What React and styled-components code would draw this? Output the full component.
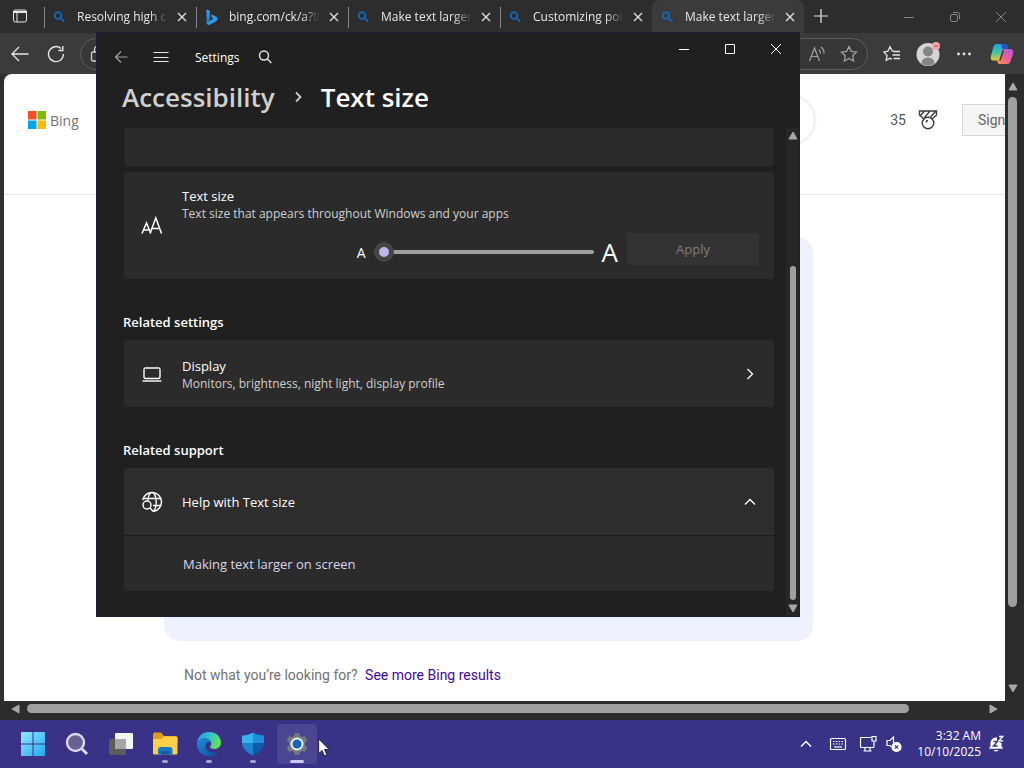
import { useState } from 'react';
import styled, { createGlobalStyle } from "styled-components"

const tabs = [
    { id: 1, title: "Resolving high contrast", icon: "search" },
    { id: 2, title: "bing.com/ck/a?!&&p=", icon: "bing" },
    { id: 3, title: "Make text larger on", icon: "search" },
    { id: 4, title: "Customizing pointer", icon: "search" },
    { id: 5, title: "Make text larger on", icon: "search" },
]

function TabIcon({ icon }) {
    if (icon === "bing") {
        return (
            <Glyph $size={16} viewBox="0 0 16 16" stroke="none">
                <defs>
                    <linearGradient id="bingA" x1="0" y1="0" x2="0" y2="1">
                        <stop offset="0" stopColor="#37a5f5" />
                        <stop offset="1" stopColor="#1570d8" />
                    </linearGradient>
                </defs>
                <path d="M2.500.6 5.800 1.800v9.400L2.500 13.400z" fill="url(#bingA)" />
                <path d="M7 5.200 12 7.400c1.800 1 2 3.300.6 4.600L6.200 15.600c-1.800.9-3.700-.2-3.700-2.200l7-3.600-1.600-.9z" fill="#2c9be6" />
            </Glyph>
        )
    }
    return (
        <Glyph $size={14} viewBox="0 0 14 14" stroke="#1a62ae" strokeWidth="2">
            <circle cx="6" cy="5.500" r="3.300" />
            <path d="M8.500 8 12 11.500" />
        </Glyph>
    )
}

function BrowserTabs() {
    const [active, setActive] = useState(5)
    return (
        <TabStrip>
            <TabActions $w={40} $h={32} aria-label="Tab actions">
                <Glyph $size={16} viewBox="0 0 16 16">
                    <rect x="1.500" y="2" width="13" height="12" rx="2" />
                    <path d="M1.500 4.500h13M1.500 3.500h13M5 5v9" />
                </Glyph>
            </TabActions>
            {tabs.map((tab) => (
                <Tab key={tab.id} $active={tab.id === active}>
                    <TabIcon icon={tab.icon} />
                    <TabTitle onClick={() => setActive(tab.id)}>{tab.title}</TabTitle>
                    <PlainButton $w={20} $h={20} aria-label="Close tab">
                        <Glyph $size={10} viewBox="0 0 10 10" strokeWidth="1.200"><path d="m1 1 8 8M9 1 1 9" /></Glyph>
                    </PlainButton>
                </Tab>
            ))}
            <PlainButton $w={34} $h={32} aria-label="New tab">
                <Glyph $size={14} viewBox="0 0 14 14" strokeWidth="1.200"><path d="M7 0v14M0 7h14" /></Glyph>
            </PlainButton>
            <CaptionButtons>
                <PlainButton $w={46} $h={34} aria-label="Minimize browser">
                    <Glyph $size={12} viewBox="0 0 12 12"><path d="M1 6.500h10" /></Glyph>
                </PlainButton>
                <PlainButton $w={46} $h={34} aria-label="Restore browser">
                    <Glyph $size={12} viewBox="0 0 12 12">
                        <rect x="1.500" y="3.500" width="7" height="7" rx="1.500" />
                        <path d="M4 1.500h4.500a2 2 0 0 1 2 2V8" />
                    </Glyph>
                </PlainButton>
                <PlainButton $w={46} $h={34} aria-label="Close browser">
                    <Glyph $size={12} viewBox="0 0 12 12"><path d="m1 1 10 10M11 1 1 11" /></Glyph>
                </PlainButton>
            </CaptionButtons>
        </TabStrip>
    )
}

function BrowserToolbar() {
    return (
        <Toolbar>
            <PlainButton $w={36} $h={32} aria-label="Back">
                <Glyph $size={18} viewBox="0 0 18 18" strokeWidth="1.300"><path d="M17.500 9H1.500M8 2 1 9l7 7" /></Glyph>
            </PlainButton>
            <PlainButton $w={36} $h={32} aria-label="Refresh">
                <Glyph $size={18} viewBox="0 0 18 18" strokeWidth="1.400"><path d="M16.500 9A7.500 7.500 0 1 1 14 3.500M15.800 1v4.500h-4.500" /></Glyph>
            </PlainButton>
            <AddressBar>
                <Glyph $size={18} viewBox="0 0 18 18" strokeWidth="1.300">
                    <rect x="2.500" y="7" width="13" height="9" rx="1.500" />
                    <path d="M5.500 7V4.500a3.500 3.500 0 0 1 7 0V7" />
                </Glyph>
                <AddressInput aria-label="Address" />
                <PlainButton $w={32} $h={28} $dim aria-label="Read aloud">
                    <Glyph $size={18} viewBox="0 0 18 18" strokeWidth="1.200">
                        <path d="M1.500 16 6.500 3l5 13M3.200 11.500h6.600M11 4.500q1.800 1.500 1.500 4M13 2q3.300 2.500 3 6.500" />
                    </Glyph>
                </PlainButton>
                <PlainButton $w={32} $h={28} $dim aria-label="Add to favorites">
                    <Glyph $size={18} viewBox="0 0 18 18" strokeWidth="1.300">
                        <path d="m9 1.500 2.300 4.900 5.200.7-3.800 3.700.9 5.300L9 13.500l-4.600 2.600.9-5.300L1.500 7.100l5.200-.7z" />
                    </Glyph>
                </PlainButton>
            </AddressBar>
            <ToolbarActions>
                <PlainButton $w={36} $h={32} aria-label="Favorites">
                    <Glyph $size={18} viewBox="0 0 18 18" strokeWidth="1.300">
                        <path d="M11 6.300 9.300 6 7 1.800 4.900 6.200.8 7l3.200 3.400-.8 5L7 13.300l1.800.9M10.500 6.500H17M9.500 10H17M10.500 13.500H17" />
                    </Glyph>
                </PlainButton>
                <PlainButton $w={36} $h={32} aria-label="Profile">
                    <Glyph $size={26} viewBox="0 0 26 26" stroke="none">
                        <circle cx="13" cy="13.500" r="11.500" fill="#d5d5d5" />
                        <circle cx="13" cy="10.500" r="5" fill="#858585" />
                        <path d="M6.500 22.500c0-3 2-6 6.500-6s6.500 3 6.500 6q-6.500 4.500-13 0z" fill="#858585" />
                        <circle cx="21" cy="5" r="4" fill="#f3a6ac" />
                        <path d="M19 5h4" stroke="#b8434e" />
                    </Glyph>
                </PlainButton>
                <PlainButton $w={36} $h={32} aria-label="Settings and more">
                    <Glyph $size={16} viewBox="0 0 16 16" fill="#e6e6e6" stroke="none">
                        <circle cx="2.500" cy="8" r="1.400" /><circle cx="8" cy="8" r="1.400" /><circle cx="13.500" cy="8" r="1.400" />
                    </Glyph>
                </PlainButton>
                <PlainButton $w={40} $h={32} aria-label="Copilot">
                    <Glyph $size={24} viewBox="0 0 24 24" stroke="none">
                        <defs>
                            <linearGradient id="copA" x1="0" y1="0" x2="0" y2="1">
                                <stop offset="0" stopColor="#1f9ee8" /><stop offset=".5" stopColor="#3cc5a0" /><stop offset="1" stopColor="#f0c930" />
                            </linearGradient>
                            <linearGradient id="copB" x1="1" y1="0" x2="0" y2="1">
                                <stop offset="0" stopColor="#a35be8" /><stop offset=".5" stopColor="#ee5b9c" /><stop offset="1" stopColor="#f79a45" />
                            </linearGradient>
                        </defs>
                        <path d="M6.500 2h8.200c1.600 0 2.300 1 2.800 2.600l.7 2.300h-2.900c-1.800 0-2.400.8-2.900 2.500l-2 6.800c-.5 1.700-1.200 2.400-2.800 2.400H3.500c-2.800 0-3.200-2.500-2.500-5L3.300 5.200C3.900 3.100 4.800 2 6.500 2z" fill="url(#copA)" />
                        <path d="M11.500 2h3.200c1.600 0 2.300 1 2.800 2.600l.7 2.300h-2.900c-1.500 0-2.200.6-2.700 1.800z" fill="#2454c9" />
                        <path d="M17.500 22H10c-1.600 0-2.300-1-2.800-2.600l-.3-.8c1.600 0 2.300-.7 2.800-2.400l2-6.800c.5-1.700 1.100-2.500 2.900-2.500h5.900c2.800 0 3.200 2.500 2.500 5l-2.300 6.900c-.6 2.100-1.500 3.200-3.200 3.200z" fill="url(#copB)" />
                        <path d="M13.300 8.500 10 18.500" stroke="#3b3b3b" strokeWidth="1.500" />
                    </Glyph>
                </PlainButton>
            </ToolbarActions>
        </Toolbar>
    )
}

function BingPage() {
    return (
        <Page>
            <PageHeader>
                <MsLogo viewBox="0 0 18 18">
                    <path d="M0 0h8.500v8.500H0z" fill="#f25022" />
                    <path d="M9.500 0H18v8.500H9.500z" fill="#7fba00" />
                    <path d="M0 9.500h8.500V18H0z" fill="#00a4ef" />
                    <path d="M9.500 9.500H18V18H9.500z" fill="#ffb900" />
                </MsLogo>
                <Brand>Bing</Brand>
                <SearchBox aria-label="Search" />
                <Points>35</Points>
                <Glyph $size={20} viewBox="0 0 20 20" stroke="#3c3c3c" strokeWidth="1.400">
                    <path d="M1.500 1h17v4l-4 3.500h-9l-4-3.500zM6.500 1 2.500 5.500M12 1 6.500 7.500M17.500 1.500 12.500 7" />
                    <circle cx="10" cy="13" r="5.800" fill="#fff" />
                    <path d="M8 12.500a2.200 2.200 0 0 1 2-2" />
                </Glyph>
                <SignIn>Sign in</SignIn>
            </PageHeader>
            <AnswerCard />
            <PageFooter>
                Not what you’re looking for? <a href="#results">See more Bing results</a>
            </PageFooter>
        </Page>
    )
}

function Arrow({ dir }) {
    const paths = {
        up: "M5 1 9 8H1z",
        down: "M5 9 1 2h8z",
        left: "M1 5l7-4v8z",
        right: "M9 5 2 9V1z",
    }
    return (
        <Glyph $size={10} viewBox="0 0 10 10" fill="#a8a8a8" stroke="#a8a8a8"><path d={paths[dir]} strokeLinejoin="round" /></Glyph>
    )
}

function SettingsApp() {
    const [size, setSize] = useState(0)
    const [open, setOpen] = useState(true)
    return (
        <SettingsWindow>
            <TitleBar>
                <PlainButton $w={40} $h={32} $dim aria-label="Go back">
                    <Glyph $size={14} viewBox="0 0 14 14" strokeWidth="1.200"><path d="M13.500 7H1.500M7 1.500 1.500 7 7 12.500" /></Glyph>
                </PlainButton>
                <PlainButton $w={40} $h={32} aria-label="Open navigation">
                    <Glyph $size={16} viewBox="0 0 16 16"><path d="M.5 3.500h15M.5 8.500h15M.5 12.500h15" /></Glyph>
                </PlainButton>
                <AppName>Settings</AppName>
                <PlainButton $w={32} $h={32} aria-label="Find a setting">
                    <Glyph $size={14} viewBox="0 0 14 14" strokeWidth="1.400"><circle cx="6" cy="5.500" r="4.500" /><path d="m9.300 8.800 4 4.200" /></Glyph>
                </PlainButton>
                <WindowButtons>
                    <PlainButton $w={46} $h={32} aria-label="Minimize">
                        <Glyph $size={12} viewBox="0 0 12 12" stroke="#fff"><path d="M1 6.500h10" /></Glyph>
                    </PlainButton>
                    <PlainButton $w={46} $h={32} aria-label="Maximize">
                        <Glyph $size={12} viewBox="0 0 12 12" stroke="#fff"><path d="M1.500 1.500h9v9h-9z" /></Glyph>
                    </PlainButton>
                    <PlainButton $w={46} $h={32} aria-label="Close">
                        <Glyph $size={12} viewBox="0 0 12 12" stroke="#fff"><path d="m1 1 10 10M11 1 1 11" /></Glyph>
                    </PlainButton>
                </WindowButtons>
            </TitleBar>
            <Breadcrumb>
                <a href="#accessibility">Accessibility</a>
                <Glyph $size={12} viewBox="0 0 12 12" stroke="#d0d0d0" strokeWidth="1.800"><path d="m4 1.500 4.500 4.500L4 10.500" /></Glyph>
                <h1>Text size</h1>
            </Breadcrumb>
            <SettingsBody>
                <Content>
                    <PreviewCard />
                    <TextSizeCard>
                        <CardIcon>
                            <Glyph $size={22} viewBox="0 0 22 22" stroke="#fff" strokeWidth="1.500">
                                <path d="M1 18.500 5.500 8l4.300 10.500M2.500 15h6M9 18.500 14.800 3 20.500 18.500M11 13.500h7.500" />
                            </Glyph>
                        </CardIcon>
                        <TextSizeMain>
                            <CardTitle as="label" htmlFor="textsize">Text size</CardTitle>
                            <CardNote>Text size that appears throughout Windows and your apps</CardNote>
                            <SliderRow>
                                <SliderGroup>
                                    <SmallA>A</SmallA>
                                    <Slider id="textsize" type="range" min="0" max="100" value={size} onChange={(e) => setSize(Number(e.target.value))} />
                                    <LargeA>A</LargeA>
                                </SliderGroup>
                                <ApplyButton disabled={size === 0}>Apply</ApplyButton>
                            </SliderRow>
                        </TextSizeMain>
                    </TextSizeCard>

                    <SectionTitle>Related settings</SectionTitle>
                    <LinkCard>
                        <CardIcon>
                            <Glyph $size={20} viewBox="0 0 20 20" stroke="#fff" strokeWidth="1.400">
                                <rect x="2" y="4" width="16" height="10.500" rx="1.500" />
                                <path d="M.5 17h19" />
                            </Glyph>
                        </CardIcon>
                        <CardText>
                            <CardTitle>Display</CardTitle>
                            <CardNote>Monitors, brightness, night light, display profile</CardNote>
                        </CardText>
                        <Glyph $size={12} viewBox="0 0 12 12" stroke="#fff" strokeWidth="1.300"><path d="m3.500 1 5 5-5 5" /></Glyph>
                    </LinkCard>

                    <SectionTitle>Related support</SectionTitle>
                    <Expander aria-expanded={open} onClick={() => setOpen(!open)}>
                        <CardIcon>
                            <Glyph $size={22} viewBox="0 0 22 22" stroke="#fff" strokeWidth="1.400">
                                <path d="M1.700 9A9.500 9.500 0 1 1 13 20.300M2.500 7.500h17M12 14.500h7.800M7 9.500c0-4 1.500-8 4-8s4.200 4.500 4.200 9.500-1.200 8-3 9.200" />
                                <circle cx="6" cy="14" r="4" />
                                <path d="m9 17 3.500 3.800" />
                            </Glyph>
                        </CardIcon>
                        <CardText>
                            <CardTitle>Help with Text size</CardTitle>
                        </CardText>
                        <Glyph $size={12} viewBox="0 0 12 12" stroke="#fff" strokeWidth="1.300"><path d={open ? "m1 8.500 5-5 5 5" : "m1 3.500 5 5 5-5"} /></Glyph>
                    </Expander>
                    {open && (
                        <SupportLinks>
                            <a href="#larger">Making text larger on screen</a>
                        </SupportLinks>
                    )}
                </Content>
                <SettingsScroll>
                    <Arrow dir="up" />
                    <SettingsThumb />
                    <Arrow dir="down" />
                </SettingsScroll>
            </SettingsBody>
        </SettingsWindow>
    )
}

function WindowsTaskbar() {
    return (
        <Taskbar>
            <TaskButton aria-label="Start">
                <Glyph $size={24} viewBox="0 0 24 24" stroke="none">
                    <defs>
                        <linearGradient id="win" x1="0" y1="0" x2="1" y2="1">
                            <stop offset="0" stopColor="#8fe9fc" /><stop offset="1" stopColor="#22a7f0" />
                        </linearGradient>
                    </defs>
                    <path d="M1 0h10.500v11.500H0V1q0-1 1-1zM12.500 0H23q1 0 1 1v10.500H12.500zM0 12.500h11.500V24H1q-1 0-1-1zM12.500 12.500H24V23q0 1-1 1H12.500z" fill="url(#win)" />
                </Glyph>
            </TaskButton>
            <TaskButton aria-label="Search">
                <Glyph $size={24} viewBox="0 0 24 24">
                    <circle cx="10.500" cy="10.500" r="8.500" fill="#6a6192" stroke="#dcdaf0" strokeWidth="2.400" />
                    <path d="m17 17 5 5" stroke="#dcdaf0" strokeWidth="2.800" />
                </Glyph>
            </TaskButton>
            <TaskButton aria-label="Task view">
                <Glyph $size={24} viewBox="0 0 24 24" stroke="none">
                    <rect x="0" y="7" width="17" height="16" rx="1" fill="#5c5c5c" />
                    <rect x="6" y="1" width="18" height="16" rx="1" fill="#f4f4f4" />
                    <path d="M6 7h11v10H6z" fill="#a6a6a6" />
                </Glyph>
            </TaskButton>
            <TaskButton aria-label="File Explorer">
                <Glyph $size={26} viewBox="0 0 26 26" stroke="none">
                    <path d="M1 3q0-1.500 1.500-1.500H9L12 5h12q1.500 0 1.500 1.500V12H1z" fill="#e09a1a" />
                    <path d="M1 8h8l3-2.500h12q1.500 0 1.500 1.500v15q0 1.500-1.500 1.500H2.500Q1 23.500 1 22z" fill="#ffcf48" />
                    <path d="M6 23.500V19q0-3 3-3h8.500q3 0 3 3v4.500z" fill="#1478c8" />
                    <path d="M9 20h8.500v3.500H9z" fill="#125ca0" />
                </Glyph>
                <Running />
            </TaskButton>
            <TaskButton aria-label="Microsoft Edge">
                <Glyph $size={26} viewBox="0 0 26 26" stroke="none">
                    <defs>
                        <linearGradient id="edgeA" x1="0" y1="0" x2="1" y2=".3">
                            <stop offset="0" stopColor="#2496dc" /><stop offset=".55" stopColor="#35c1d0" /><stop offset="1" stopColor="#63e05b" />
                        </linearGradient>
                        <linearGradient id="edgeB" x1="0" y1="0" x2="1" y2="1">
                            <stop offset="0" stopColor="#1b8fdb" /><stop offset="1" stopColor="#114a97" />
                        </linearGradient>
                    </defs>
                    <path d="M1 12C1.500 5.500 6.500 1 13 1c7 0 12 4.800 12 10.500 0 4-3 6.500-6.700 6.500-2.300 0-4.300-.8-4.300-2 0-.8 1.200-1.200 1.200-3.200C15.200 9.500 12 7.500 8.500 7.500 5 7.500 2 9 1 12z" fill="url(#edgeA)" />
                    <path d="M1 12.500C1.500 9.500 4.500 7.500 8.500 7.500c3.200 0 6 1.600 6.600 4-1-1-5.600-.6-5.600 4 0 3.500 3.500 6 7.500 6 2.200 0 4-.5 5.500-1.500-2 3-5.300 5-9.500 5-7 0-12.400-5.500-12-12.500z" fill="url(#edgeB)" />
                </Glyph>
                <Running />
            </TaskButton>
            <TaskButton aria-label="Windows Security">
                <Glyph $size={24} viewBox="0 0 24 24" stroke="none">
                    <path d="M12 .5q4.500 3 11 3V11H12z" fill="#1c8edb" />
                    <path d="M12 .5q-4.500 3-11 3V11h11z" fill="#38b1ec" />
                    <path d="M1 11h11v12.500Q2 19.500 1 11z" fill="#1b83cf" />
                    <path d="M23 11H12v12.500Q22 19.500 23 11z" fill="#0f5ba8" />
                </Glyph>
                <Running />
            </TaskButton>
            <TaskButton $active aria-label="Settings">
                <Glyph $size={24} viewBox="0 0 24 24" stroke="none">
                    <path d="M9.800 1h4.400l.8 3 2 1.100 3-.9 2.300 3.900-2.300 2.200v3.400l2.300 2.200-2.300 3.900-3-.9-2 1.100-.8 3H9.800l-.8-3-2-1.100-3 .9-2.300-3.900L4 13.700v-3.400L1.700 8.100 4 4.200l3 .9L9 4z" fill="#737a80" />
                    <circle cx="12" cy="12" r="6.500" fill="#e8eef2" />
                    <circle cx="12" cy="12" r="4.500" fill="#1866b8" />
                </Glyph>
                <Running $active />
            </TaskButton>
            <Tray>
                <PlainButton $w={32} $h={40} aria-label="Show hidden icons">
                    <Glyph $size={12} viewBox="0 0 12 12" stroke="#fff" strokeWidth="1.500"><path d="m1 8.500 5-5 5 5" /></Glyph>
                </PlainButton>
                <PlainButton $w={32} $h={40} aria-label="Touch keyboard">
                    <Glyph $size={18} viewBox="0 0 18 18" stroke="#fff" strokeWidth="1.200">
                        <rect x="1.500" y="3.500" width="15" height="11" rx="1" />
                        <path d="M4 6.500h10M4 9h10" strokeDasharray="1.500 1.300" />
                        <path d="M5 12h8" />
                    </Glyph>
                </PlainButton>
                <PlainButton $w={54} $h={40} aria-label="Network and sound">
                    <Glyph $size={18} viewBox="0 0 18 18" stroke="#fff" strokeWidth="1.200">
                        <path d="M12 2.500H2.500q-1 0-1 1v8q0 1 1 1H14q1 0 1-1V8M6 12.500v3M11 12.500v3M4.500 16h8M13 1.500h4v4.500h-4zM15 6v3" />
                    </Glyph>
                    <Glyph $size={18} viewBox="0 0 18 18" stroke="#fff" strokeWidth="1.200">
                        <path d="M8.500 8V2L5 5.500H2v5h3l1.500 1.500" />
                        <circle cx="11.500" cy="12" r="4.500" fill="#fff" />
                        <path d="m9.800 10.300 3.400 3.400M13.200 10.300l-3.400 3.400" stroke="#3a3287" />
                    </Glyph>
                </PlainButton>
                <Clock>
                    <span>3:32 AM</span>
                    <span>10/10/2025</span>
                </Clock>
                <PlainButton $w={20} $h={40} aria-label="Notifications">
                    <Glyph $size={18} viewBox="0 0 18 18" stroke="none">
                        <path d="M3.500 8A5.500 5.500 0 0 1 10 2.600V6l4.500 2V11l1.500 2.800H2L3.500 11z" fill="#fff" />
                        <path d="M6.500 15h5q-2.500 3-5 0z" fill="#fff" />
                        <path d="M6.500 6.500h4l-4 4.500h4.200" stroke="#3a3287" strokeWidth="1.400" />
                        <path d="M12 1.500h3.800L12 5.800h4.200" stroke="#fff" strokeWidth="1.300" />
                    </Glyph>
                </PlainButton>
            </Tray>
        </Taskbar>
    )
}

export default function App() {
    return (
        <Desktop>
            <GlobalStyle />
            <Browser>
                <BrowserTabs />
                <BrowserToolbar />
                <PageArea>
                    <BingPage />
                    <VerticalScroll>
                        <Arrow dir="up" />
                        <VerticalThumb />
                        <Arrow dir="down" />
                    </VerticalScroll>
                </PageArea>
                <HorizontalScroll>
                    <Arrow dir="left" />
                    <HorizontalThumb />
                    <Arrow dir="right" />
                </HorizontalScroll>
            </Browser>
            <WindowsTaskbar />
            <SettingsApp />
            <Cursor viewBox="0 0 12 19">
                <path d="M.7 1v14.600l3.400-3.200 2.300 5.400 2.400-1-2.300-5.300h4.700z" fill="#fff" stroke="#111" strokeWidth=".8" />
            </Cursor>
        </Desktop>
    )
}

const GlobalStyle = createGlobalStyle`
*{
    box-sizing: border-box;
}
body{
    margin: 0;
    font-family: 'Open Sans', 'Noto Sans', sans-serif;
    overflow: hidden;
}
button, input{
    font-family: inherit;
    padding: 0;
    margin: 0;
    border: none;
}
`

const Desktop = styled.div`
position: relative;
height: 100vh;
display: flex;
flex-direction: column;
background: #3a3287;
`

const Glyph = styled.svg.attrs((p) => ({ fill: p.fill || "none", stroke: p.stroke || "currentColor" }))`
width: ${(p) => p.$size}px;
height: ${(p) => p.$size}px;
flex-shrink: 0;
display: block;
`

const PlainButton = styled.button`
width: ${(p) => p.$w}px;
height: ${(p) => p.$h}px;
flex-shrink: 0;
display: flex;
align-items: center;
justify-content: center;
gap: 8px;
background: none;
color: ${(p) => p.$dim ? "#a0a0a0" : "#e6e6e6"};
`

/* browser */
const Browser = styled.div`
flex: 1;
min-height: 0;
display: flex;
flex-direction: column;
background: #3b3b3b;
`

const TabStrip = styled.div`
height: 33px;
display: flex;
background: #2d2d2d;
`

const TabActions = styled(PlainButton)`
margin-right: 4px;
`

const Tab = styled.div`
flex: 0 1 152px;
min-width: 0;
height: 33px;
padding: 0 4px 0 7px;
display: flex;
align-items: center;
border-left: 1px solid transparent;
border-image: ${(p) => p.$active ? "none" : "linear-gradient(transparent 8px, #8a8a8a 8px, #8a8a8a 27px, transparent 27px) 1"};
border-radius: 8px 8px 0 0;
background: ${(p) => p.$active ? "#3b3b3b" : "none"};
svg{
    margin-right: auto;
}
button svg{
    margin: 0;
}
`

const TabTitle = styled.button`
width: 91px;
margin-right: 4px;
overflow: hidden;
white-space: nowrap;
text-align: left;
font-size: 12px;
line-height: 20px;
color: #e6e6e6;
background: none;
mask-image: linear-gradient(90deg, #000 80%, transparent 100%);
`

const CaptionButtons = styled.div`
margin-left: auto;
display: flex;
button{
    color: #858585;
}
`

const Toolbar = styled.div`
height: 41px;
padding: 0 2px;
display: flex;
align-items: center;
background: #3b3b3b;
`

const AddressBar = styled.div`
flex: 1;
height: 32px;
margin-left: 6px;
padding: 0 2px 0 8px;
display: flex;
align-items: center;
color: #cfcfcf;
background: #373737;
border: 1px solid #5c5c5c;
border-radius: 16px;
`

const AddressInput = styled.input`
flex: 1;
min-width: 0;
background: none;
color: #e6e6e6;
outline: none;
`

const ToolbarActions = styled.div`
margin-left: 6px;
display: flex;
`

const PageArea = styled.div`
flex: 1;
min-height: 0;
padding-left: 4px;
display: flex;
background: #2f2f2f;
`

const Page = styled.main`
flex: 1;
min-width: 0;
overflow: hidden;
display: flex;
flex-direction: column;
background: #fff;
border-radius: 8px 0 0 0;
font-family: Roboto, 'Liberation Sans', sans-serif;
`

const PageHeader = styled.header`
height: 121px;
padding: 0 0 28px 24px;
display: flex;
align-items: center;
border-bottom: 1px solid #e4e4e4;
`

const MsLogo = styled.svg`
width: 18px;
height: 18px;
flex-shrink: 0;
`

const Brand = styled.span`
width: 56px;
margin-left: 4px;
flex-shrink: 0;
font-family: 'Open Sans', sans-serif;
font-size: 14px;
color: #737373;
`

const SearchBox = styled.input`
flex: 1 0 200px;
height: 48px;
background: #fff;
border-radius: 24px;
box-shadow: 0 0 4px rgba(0, 0, 0, 0.2);
outline: none;
`

const Points = styled.span`
margin: 0 12px 0 76px;
font-size: 14px;
color: #555;
`

const SignIn = styled.button`
flex-shrink: 0;
width: 74px;
height: 32px;
margin: 0 -31px 0 24px;
font-size: 14px;
color: #666;
background: #f5f5f5;
border: 1px solid #d6d6d6;
`

const AnswerCard = styled.section`
flex: 1;
margin: 42px 192px 0 160px;
background: #eff1fe;
border-radius: 16px;
`

const PageFooter = styled.footer`
height: 60px;
padding: 20px 180px 0;
font-size: 14px;
line-height: 28px;
color: #717171;
a{
    margin-left: 4px;
    color: #4007a2;
    text-decoration: none;
}
`

const VerticalScroll = styled.div`
width: 19px;
padding: 8px 4px 8px 0;
display: flex;
flex-direction: column;
align-items: center;
gap: 5px;
background: #2c2c2c;
`

const VerticalThumb = styled.div`
width: 9px;
flex: 0 1 510px;
margin-bottom: auto;
background: #9f9f9f;
border-radius: 5px;
`

const HorizontalScroll = styled.div`
height: 19px;
padding: 0 26px 4px 11px;
display: flex;
align-items: center;
gap: 6px;
background: #2c2c2c;
`

const HorizontalThumb = styled.div`
height: 9px;
flex: 0 1 882px;
margin-right: auto;
background: #9f9f9f;
border-radius: 5px;
`

/* settings window, floats over the browser */
const SettingsWindow = styled.section`
position: absolute;
top: 32px;
right: 224px;
bottom: 151px;
left: 96px;
display: flex;
flex-direction: column;
background: #202020;
border: 1px solid #1b1f38;
color: #fff;
overflow: hidden;
`

const TitleBar = styled.div`
height: 48px;
padding: 8px 0 0 4px;
display: flex;
`

const AppName = styled.span`
margin: 0 9px 0 14px;
font-size: 12px;
line-height: 34px;
`

const WindowButtons = styled.div`
margin: -8px 0 0 auto;
display: flex;
`

const Breadcrumb = styled.div`
height: 47px;
padding: 0 0 15px 25px;
display: flex;
align-items: center;
gap: 17px;
font-size: 26px;
font-weight: 600;
line-height: 32px;
a{
    color: #cfcfcf;
    text-decoration: none;
}
h1{
    margin: 0;
    font-size: inherit;
    font-weight: inherit;
}
`

const SettingsBody = styled.div`
flex: 1;
min-height: 0;
display: flex;
`

const Content = styled.div`
flex: 1;
min-width: 0;
padding: 0 12px 0 27px;
`

const PreviewCard = styled.div`
height: 39px;
margin-bottom: 5px;
background: #2b2b2b;
border: 1px solid #262626;
border-top: none;
border-radius: 0 0 4px 4px;
`

const TextSizeCard = styled.div`
padding: 14px 15px 14px 16px;
display: flex;
background: #2b2b2b;
border-radius: 4px;
`

const CardIcon = styled.span`
width: 24px;
margin-right: 18px;
flex-shrink: 0;
display: flex;
align-items: center;
justify-content: center;
`

const TextSizeMain = styled.div`
flex: 1;
display: flex;
flex-direction: column;
`

const CardTitle = styled.span`
font-size: 13px;
line-height: 20px;
color: #fff;
`

const CardNote = styled.span`
font-size: 12px;
line-height: 16px;
color: #cfcfcf;
`

const SliderRow = styled.div`
margin-top: 11px;
display: flex;
align-items: center;
justify-content: flex-end;
`

const SliderGroup = styled.div`
padding-top: 6px;
display: flex;
align-items: center;
`

const SmallA = styled.span`
margin-right: 8px;
font-size: 14px;
`

const Slider = styled.input`
width: 220px;
height: 20px;
appearance: none;
background: none;
&::-webkit-slider-runnable-track{
    height: 4px;
    background: #a0a0a0;
    border-radius: 2px;
}
&::-webkit-slider-thumb{
    appearance: none;
    width: 20px;
    height: 20px;
    margin-top: -8px;
    background: #bdb5e8;
    border: 5px solid #454545;
    border-radius: 50%;
}
`

const LargeA = styled.span`
margin: 0 9px 0 8px;
font-size: 26px;
line-height: 26px;
`

const ApplyButton = styled.button`
width: 132px;
height: 32px;
font-size: 13px;
color: #fff;
background: #333333;
&:disabled{
    color: #7c7c7c;
}
`

const SectionTitle = styled.h2`
margin: 33px 0 8px -1px;
font-size: 13px;
font-weight: 600;
line-height: 20px;
`

const LinkCard = styled.button`
width: 100%;
min-height: 67px;
padding: 0 18px 0 16px;
display: flex;
align-items: center;
text-align: left;
background: #2b2b2b;
border-radius: 4px;
`

const Expander = styled(LinkCard)`
min-height: 68px;
background: #2d2d2d;
border-bottom: 1px solid #1d1d1d;
border-radius: 4px 4px 0 0;
`

const CardText = styled.span`
flex: 1;
display: flex;
flex-direction: column;
`

const SupportLinks = styled.div`
padding: 18px 59px 17px;
font-size: 13px;
line-height: 20px;
background: #2b2b2b;
border-radius: 0 0 4px 4px;
a{
    color: #dad6ea;
    text-decoration: none;
}
`

const SettingsScroll = styled.div`
width: 13px;
padding: 3px 0;
display: flex;
flex-direction: column;
align-items: center;
justify-content: space-between;
background: #272727;
`

const SettingsThumb = styled.div`
width: 6px;
height: 334px;
margin: auto 0 3px;
background: #9f9f9f;
border-radius: 3px;
`

/* taskbar */
const Taskbar = styled.footer`
height: 48px;
padding: 0 18px 0 13px;
display: flex;
align-items: center;
gap: 4px;
background: #3a3287;
color: #fff;
`

const TaskButton = styled.button`
position: relative;
width: 40px;
height: 40px;
display: flex;
align-items: center;
justify-content: center;
background: ${(p) => p.$active ? "#4c4591" : "none"};
border-radius: 4px;
`

const Running = styled.span`
position: absolute;
bottom: 1px;
left: 50%;
width: ${(p) => p.$active ? 14 : 6}px;
height: 3px;
background: ${(p) => p.$active ? "#cdc6f0" : "#a9a3cf"};
border-radius: 2px;
transform: translateX(-50%);
`

const Tray = styled.div`
margin-left: auto;
display: flex;
align-items: center;
`

const Clock = styled.div`
margin: 0 5px 0 9px;
display: flex;
flex-direction: column;
align-items: flex-end;
font-size: 12px;
line-height: 16px;
`

const Cursor = styled.svg`
position: absolute;
top: 738px;
left: 318px;
width: 12px;
height: 19px;
`
